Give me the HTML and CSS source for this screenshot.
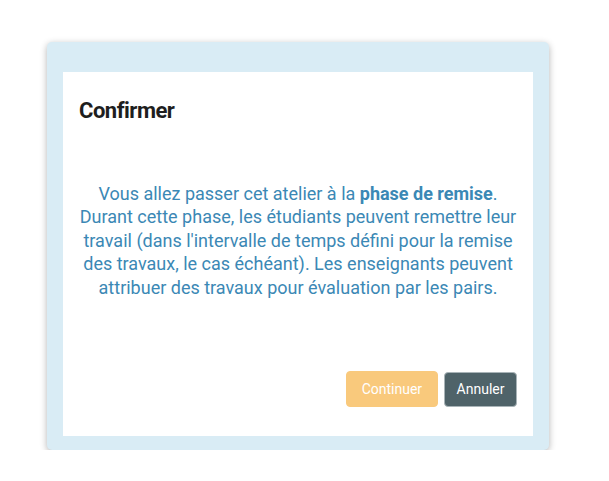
FILE: index.html
```html
<!DOCTYPE html>
<html lang="fr">
<head>
<meta charset="utf-8">
<link rel="stylesheet" href="styles.css">
</head>
<body>
<div class="page">
  <div class="card">
    <div class="dialog">
      <h2 class="title">Confirmer</h2>
      <p class="message">Vous allez passer cet atelier à la <strong>phase de remise</strong>. Durant cette phase, les étudiants peuvent remettre leur travail (dans l'intervalle de temps défini pour la remise des travaux, le cas échéant). Les enseignants peuvent attribuer des travaux pour évaluation par les pairs.</p>
      <div class="actions">
        <button class="btn btn-primary">Continuer</button>
        <button class="btn btn-secondary">Annuler</button>
      </div>
    </div>
  </div>
</div>
</body>
</html>
```
FILE: styles.css
```css
html, body {
  margin: 0;
  padding: 0;
  background: #ffffff;
  font-family: Roboto, "Liberation Sans", sans-serif;
}
.page {
  padding: 42px 0 0 47px;
}
.card {
  width: 470px;
  height: 364px;
  padding: 30px 16px 14px 16px;
  background: #d9ecf5;
  border-radius: 5px;
  box-shadow: 0 2px 7px rgba(0, 0, 0, 0.3);
}
.dialog {
  box-sizing: border-box;
  height: 364px;
  background: #ffffff;
  padding: 25.5px 16px 29px 16px;
  display: flex;
  flex-direction: column;
}
.title {
  margin: 0;
  font-size: 22px;
  line-height: 26px;
  font-weight: 700;
  letter-spacing: -0.5px;
  color: #1e1e1e;
}
.message {
  margin: 58.5px 0 0 0;
  font-size: 18px;
  line-height: 23.4px;
  text-align: center;
  color: #3b88b5;
}
.message strong {
  font-weight: 700;
}
.actions {
  margin-top: auto;
  display: flex;
  justify-content: flex-end;
  align-items: center;
  gap: 6px;
}
.btn {
  font-family: Roboto, "Liberation Sans", sans-serif;
  font-size: 14px;
  color: #ffffff;
  border-radius: 4px;
  cursor: pointer;
}
.btn-primary {
  height: 36px;
  background: #f9c97c;
  border: 1px solid #f9c97c;
  padding: 0 15px;
}
.btn-secondary {
  height: 35px;
  background: #4f6369;
  border: 1px solid #a9b4b8;
  padding: 0 11.5px;
}
```
